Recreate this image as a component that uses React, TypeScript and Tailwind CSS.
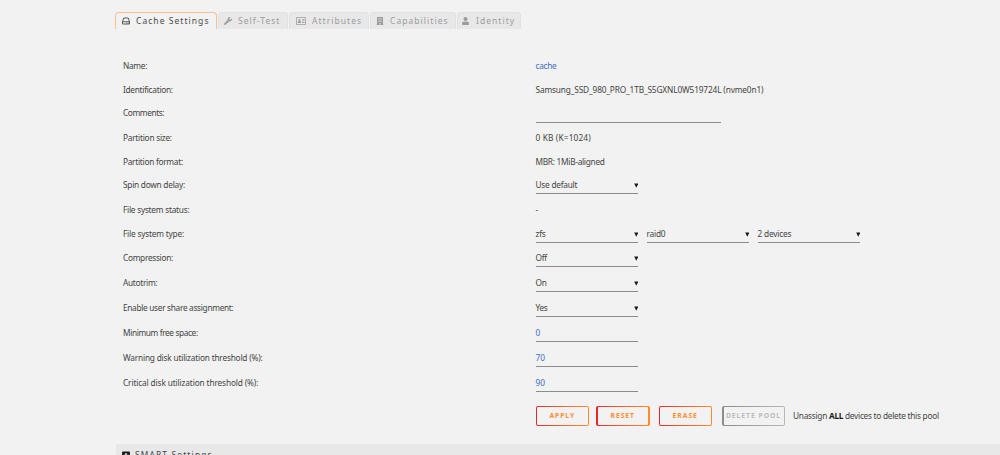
import { ReactNode } from "react";
import { FaBuilding, FaPlusSquare, FaUser, FaWrench } from "react-icons/fa";

interface TabProps {
    icon: ReactNode;
    label: string;
    className: string;
    active?: boolean;
}

function Tab({ icon, label, className, active }: TabProps) {
    return (
        <div
            className={`flex h-[17px] shrink-0 items-center rounded-t-[4px] border border-b-0 whitespace-nowrap ${className} ${
                active
                    ? "border-[#fbc08d] bg-[#f2f2f2] text-[#4a4a4a]"
                    : "border-[#e2e2e2] bg-[#e8e8e8] text-[#9c9c9c]"
            }`}
        >
            <span className="w-[14px] shrink-0 text-[8px]">{icon}</span>
            {label}
        </div>
    );
}

function DriveIcon() {
    return (
        <svg viewBox="0 0 16 16" className="h-[8px] w-[8px]" fill="none" stroke="currentColor" strokeWidth="1.8">
            <path d="M1 9.5 3.5 2h9L15 9.5V14H1zM1 9.5h14" />
            <path d="M9 12h1.5M11.8 12h1.5" />
        </svg>
    );
}

function CardIcon() {
    return (
        <svg viewBox="0 0 20 16" className="h-[8px] w-[10px]" fill="none" stroke="currentColor" strokeWidth="1.5">
            <path d="M1 1h18v14H1z" />
            <path d="M12 5h5M12 8h5M12 11h5" />
            <circle cx="6.8" cy="6" r="2.2" fill="currentColor" stroke="none" />
            <path d="M3.5 12V9.5Q4.5 8 6.8 8T10 9.5V12z" fill="currentColor" stroke="none" />
        </svg>
    );
}

function Row({
    label,
    className,
    children,
}: {
    label: string;
    className: string;
    children?: ReactNode;
}) {
    return (
        <div className={`flex shrink-0 items-start whitespace-nowrap ${className}`}>
            <div className="w-[412.5px] shrink-0">{label}</div>
            <div className="flex gap-[8.5px]">{children}</div>
        </div>
    );
}

function Select({ value }: { value: string }) {
    return (
        <div className="flex h-[15px] w-[102.5px] items-start justify-between border-b border-[#8c8c8c]">
            {value}
            <svg viewBox="0 0 5 5" className="mt-[4px] h-[5px] w-[4.5px] fill-[#1c1b1b]">
                <path d="M0.2 0.3h4.6L2.5 4.9z" />
            </svg>
        </div>
    );
}

function Field({ value, className = "w-[102.5px]" }: { value: string; className?: string }) {
    return (
        <div className={`h-[15px] border-b border-[#8c8c8c] tracking-[0.1px] text-[#446fc6] ${className}`}>{value}</div>
    );
}

function Button({ label, className }: { label: string; className: string }) {
    return (
        <button className={`h-[20px] shrink-0 rounded-[2px] px-[1.5px] py-px ${className}`}>
            <span className="flex h-full w-full items-center justify-center rounded-[1px] bg-[#f2f2f2] text-[6.8px] font-bold tracking-[0.95px] whitespace-nowrap">
                {label}
            </span>
        </button>
    );
}

const orange = "bg-linear-to-r from-[#e22828] to-[#ff8c2f] text-[#ff8c2f]";

export default function App() {
    return (
        <div className="flex h-[455px] w-[1000px] flex-col overflow-hidden bg-[#f2f2f2] font-['Noto_Sans',sans-serif] text-[8.3px] leading-[12px] tracking-[-0.2px] text-[#444444]">
            <div className="mt-[12px] ml-[115px] flex h-[17px] gap-px text-[8.5px] tracking-[1.05px]">
                <Tab active icon={<DriveIcon />} label="Cache Settings" className="w-[102px] pl-[6px]" />
                <Tab icon={<FaWrench />} label="Self-Test" className="w-[70px] pl-[5px]" />
                <Tab icon={<CardIcon />} label="Attributes" className="w-[80px] gap-[2px] pl-[6px]" />
                <Tab icon={<FaBuilding />} label="Capabilities" className="w-[86px] pl-[5px]" />
                <Tab icon={<FaUser className="h-[8px] w-[7px]" />} label="Identity" className="w-[64px] pl-[4px]" />
            </div>

            <div className="mt-[31px] flex flex-col pl-[123px]">
                <Row label="Name:" className="h-[24px] tracking-[-0.3px]">
                    <span className="text-[#446fc6]">cache</span>
                </Row>
                <Row label="Identification:" className="h-[23px] tracking-[-0.28px]">
                    <span className="tracking-[-0.15px]">Samsung_SSD_980_PRO_1TB_S5GXNL0W519724L (nvme0n1)</span>
                </Row>
                <Row label="Comments:" className="h-[25px] tracking-[-0.4px]">
                    <Field value="" className="mt-px w-[185px]" />
                </Row>
                <Row label="Partition size:" className="h-[24px] tracking-[-0.25px]">
                    <span className="tracking-[0.15px]">0 KB (K=1024)</span>
                </Row>
                <Row label="Partition format:" className="h-[23px] tracking-[-0.28px]">
                    <span>MBR: 1MiB-aligned</span>
                </Row>
                <Row label="Spin down delay:" className="h-[25px] tracking-[-0.25px]">
                    <Select value="Use default" />
                </Row>
                <Row label="File system status:" className="h-[24px] tracking-[-0.25px]">
                    <span>-</span>
                </Row>
                <Row label="File system type:" className="h-[24px]">
                    <Select value="zfs" />
                    <Select value="raid0" />
                    <Select value="2 devices" />
                </Row>
                <Row label="Compression:" className="h-[25px] tracking-[-0.3px]">
                    <Select value="Off" />
                </Row>
                <Row label="Autotrim:" className="h-[25px] tracking-[-0.3px]">
                    <Select value="On" />
                </Row>
                <Row label="Enable user share assignment:" className="h-[25px] tracking-[-0.31px]">
                    <Select value="Yes" />
                </Row>
                <Row label="Minimum free space:" className="h-[25px] tracking-[-0.38px]">
                    <Field value="0" />
                </Row>
                <Row label="Warning disk utilization threshold (%):" className="h-[25px]">
                    <Field value="70" />
                </Row>
                <Row label="Critical disk utilization threshold (%):" className="h-[29px] tracking-[-0.14px]">
                    <Field value="90" />
                </Row>
            </div>

            <div className="flex h-[20px] shrink-0 items-center pl-[535.5px]">
                <Button label="APPLY" className={`w-[53.5px] ${orange}`} />
                <Button label="RESET" className={`ml-[7px] w-[53.5px] ${orange}`} />
                <Button label="ERASE" className={`ml-[9px] w-[53.5px] ${orange}`} />
                <Button
                    label="DELETE POOL"
                    className="ml-[10px] w-[63px] bg-linear-to-r from-[#8c8c8c] to-[#b8b8b8] text-[#bcbcbc]"
                />
                <span className="ml-[8px] tracking-[-0.27px] whitespace-nowrap">
                    Unassign <b className="text-[#1c1b1b]">ALL</b> devices to delete this pool
                </span>
            </div>

            <div className="mt-[18px] ml-[116px] flex h-[22px] shrink-0 items-center bg-[#e8e8e8] pl-[6px] text-[8.3px] tracking-[1.2px]">
                <FaPlusSquare className="mr-[5px] h-[9px] w-[8px] text-[#1c1b1b]" />
                SMART Settings
            </div>
        </div>
    );
}
